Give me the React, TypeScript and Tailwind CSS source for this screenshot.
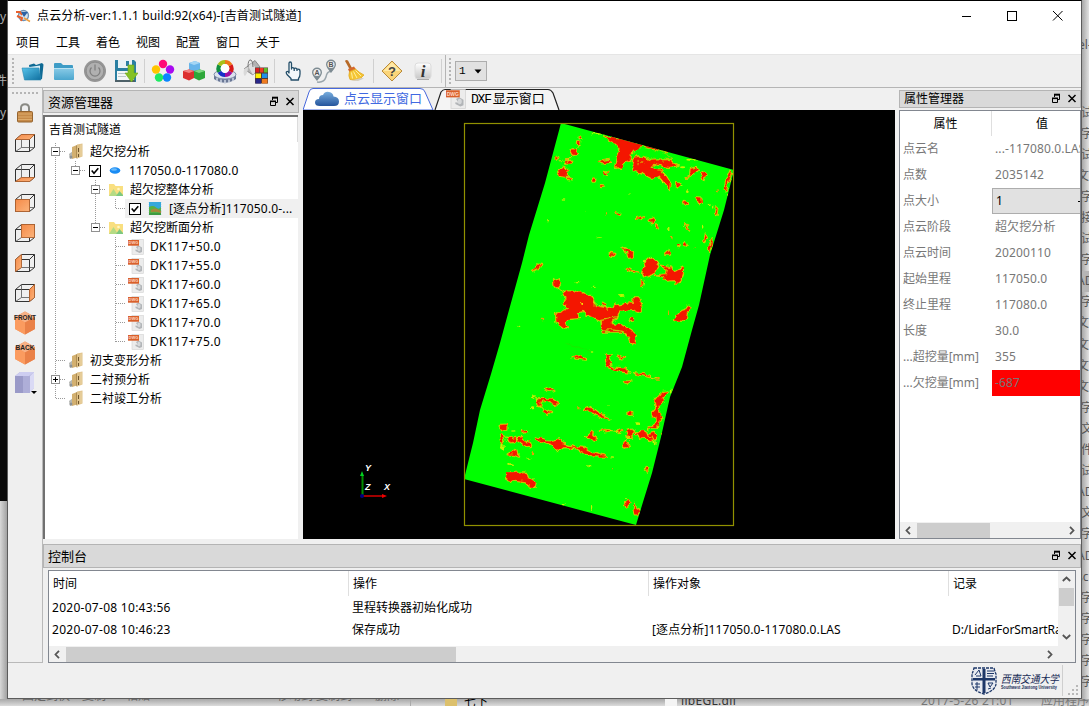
import React from "react";

const UI = "font-['Noto_Sans','Noto_Sans_CJK_SC',sans-serif]";

/* ---------- toolbar icons ---------- */

function FolderOpen() {
  return (
    <svg width="24" height="22" viewBox="0 0 24 22">
      <defs>
        <linearGradient id="fo" x1="0" y1="0" x2="1" y2="1">
          <stop offset="0" stopColor="#57c3ea" />
          <stop offset="1" stopColor="#0f6f9f" />
        </linearGradient>
      </defs>
      <path d="M8 5 L13 3.500 L15 5 L21 3 L22.500 4.500 L21 19 L10 19 Z" fill="#0f6a94" />
      <path d="M5 7.500 L19 5.500 L19 19 L7 19 Z" fill="#d9eef7" />
      <path d="M1 8 H18 L20 20 H3.500 Z" fill="url(#fo)" stroke="#2a86ae" strokeWidth=".6" />
    </svg>
  );
}
function Folder() {
  return (
    <svg width="24" height="22" viewBox="0 0 24 22">
      <defs>
        <linearGradient id="fb" x1="0" y1="0" x2="0" y2="1">
          <stop offset="0" stopColor="#8acbe7" />
          <stop offset="1" stopColor="#4ba6ce" />
        </linearGradient>
      </defs>
      <path d="M2 4 Q2 3 3 3 H9 L11 5 H20 Q21 5 21 6 V10 H2 Z" fill="#3e9cc6" />
      <rect x="2" y="8" width="20" height="12" rx="1" fill="url(#fb)" />
      <path d="M2 8.500 H22" stroke="#b9e2f2" />
    </svg>
  );
}
function Power() {
  return (
    <svg width="24" height="24" viewBox="0 0 24 24">
      <circle cx="12" cy="12" r="11" fill="#959595" />
      <circle cx="12" cy="12" r="8.800" fill="#b0b0b0" stroke="#858585" strokeWidth=".7" />
      <path d="M8.500 8.500 A5 5 0 1 0 15.500 8.500 M12 5.500 V11.500" fill="none" stroke="#7d7d7d" strokeWidth="1.200" />
    </svg>
  );
}
function Save() {
  return (
    <svg width="24" height="24" viewBox="0 0 24 24">
      <path d="M1 1 H20 L22 3 V23 H1 Z" fill="#2a7fa2" />
      <rect x="4" y="1" width="14" height="8" fill="#e8f2f6" />
      <rect x="12" y="2" width="3" height="5" fill="#2a7fa2" />
      <rect x="3" y="12" width="17" height="9" fill="#f3f7f8" />
      <path d="M4 14.500 H12 M4 17.500 H12" stroke="#bcc8cc" />
      <rect x="1" y="21" width="20" height="2" fill="#4d6068" />
      <path d="M14 6 H20 V14 H24 L17.500 23 L11 14 H14 Z" fill="#84c225" stroke="#6aa517" strokeWidth=".6" />
    </svg>
  );
}
function Dots() {
  return (
    <svg width="24" height="24" viewBox="0 0 24 24">
      <circle cx="12" cy="5" r="4.200" fill="#ff0a78" />
      <circle cx="19" cy="10.500" r="4.200" fill="#a80af0" />
      <circle cx="16" cy="18.500" r="4.200" fill="#0a86ff" />
      <circle cx="8" cy="18.500" r="4.200" fill="#1eea62" />
      <circle cx="5" cy="10.500" r="4.200" fill="#ffc400" />
    </svg>
  );
}
function Cubes() {
  return (
    <svg width="24" height="24" viewBox="0 0 24 24">
      <path d="M7 4 L13 2 L18 4 V11 L12 12.500 L7 11 Z" fill="#67b4ea" />
      <path d="M7 4 L13 2 L18 4 L12 6 Z" fill="#a5d6f5" />
      <path d="M1 12 L7 10.500 L12 12 V19 L7 21.500 L1 19 Z" fill="#dc2f2f" />
      <path d="M1 12 L7 10.500 L12 12 L7 14 Z" fill="#f28080" />
      <path d="M12 12 L18 10.500 L23 12 V19 L17 21.500 L12 19 Z" fill="#2ea73a" />
      <path d="M12 12 L18 10.500 L23 12 L17 14 Z" fill="#80d884" />
    </svg>
  );
}
function ColorRing() {
  return (
    <svg width="24" height="25" viewBox="0 0 24 25">
      <path d="M1 15 V20 Q12 27.500 23 20 V15 Z" fill="#6a7896" />
      <ellipse cx="12" cy="15.500" rx="11" ry="4.500" fill="#dde3ee" stroke="#8290ab" />
      <path d="M4 19 V22 M8 20.500 V24 M12 21 V25 M16 20.500 V24 M20 19 V22" stroke="#d2d9e6" strokeWidth="1.500" />
      <g fill="none" strokeWidth="4.200">
        <path d="M12 3 A6.500 6.500 0 0 1 17.600 6.200" stroke="#f07818" />
        <path d="M17.600 6.200 A6.500 6.500 0 0 1 17.600 12.800" stroke="#d81818" />
        <path d="M17.600 12.800 A6.500 6.500 0 0 1 12 16" stroke="#a010a0" />
        <path d="M12 16 A6.500 6.500 0 0 1 6.400 12.800" stroke="#1830c8" />
        <path d="M6.400 12.800 A6.500 6.500 0 0 1 6.400 6.200" stroke="#109040" />
        <path d="M6.400 6.200 A6.500 6.500 0 0 1 12 3" stroke="#a8c018" />
      </g>
      <circle cx="12" cy="9.500" r="4.400" fill="#fff" />
    </svg>
  );
}
function PaintGrid() {
  return (
    <svg width="25" height="25" viewBox="0 0 25 25">
      <path d="M5 7 L12 1.500 L17 8 L10 16 L1 10 Z" fill="#b3b3b3" stroke="#8a8a8a" />
      <path d="M5 7 L9 4 L14 11 L10 16 Z" fill="#dedede" />
      <path d="M1 10 Q0 16 2 17 Q5 14 5 8 Z" fill="#d9d9d9" />
      <path d="M5 8 Q5 0 8 1 Q10 2 10 8" fill="none" stroke="#777" />
      <rect x="12" y="8.500" width="13" height="16" fill="#553b32" />
      <rect x="12.500" y="9" width="3.600" height="4.500" fill="#d82020" />
      <rect x="16.800" y="9" width="3.600" height="4.500" fill="#f03a24" />
      <rect x="21" y="9" width="3.600" height="4.500" fill="#5ebd2b" />
      <rect x="12.500" y="14.500" width="5.500" height="4.500" fill="#fff000" />
      <rect x="19" y="14.500" width="5.500" height="4.500" fill="#2090e8" />
      <rect x="12.500" y="20" width="5.500" height="4.500" fill="#29288a" />
      <rect x="19" y="20" width="5.500" height="4.500" fill="#ee7b20" />
    </svg>
  );
}
function Hand() {
  return (
    <svg width="20" height="24" viewBox="0 0 20 24" fill="#f4f8fa" stroke="#244e69" strokeWidth="1.300" strokeLinejoin="round">
      <path d="M6 14 V4.500 Q6 3 7.200 3 T8.500 4.500 V10 V9 Q9.800 8 11.200 9.500 Q12.800 8.300 14 10.200 Q16.800 9.700 17 12 V15 Q17 18 15.500 19.500 V21 H8 V19.500 L4 15.500 Q2.500 13 4 12.500 Q5 12.200 6 14 Z" />
      <path d="M11.200 9.500 V12 M14 10.200 V12" fill="none" />
    </svg>
  );
}
function PinAB() {
  return (
    <svg width="26" height="25" viewBox="0 0 26 25">
      <path d="M6 23 Q13 24 15 18 Q16 12 20 12.500" fill="none" stroke="#9aa5ab" strokeWidth="1.500" />
      <path d="M6 22 Q1 16 1 13.500 A5 5 0 0 1 11 13.500 Q11 16 6 22 Z M20 14 Q15 8 15 5.500 A5 5 0 0 1 25 5.500 Q25 8 20 14 Z" fill="#7d8b92" />
      <circle cx="6" cy="13.500" r="3.600" fill="#eee" />
      <circle cx="20" cy="5.500" r="3.600" fill="#eee" />
      <text x="6" y="16" textAnchor="middle" className="font-['Liberation_Sans',sans-serif] text-[7px] font-bold" fill="#555">A</text>
      <text x="20" y="8" textAnchor="middle" className="font-['Liberation_Sans',sans-serif] text-[7px] font-bold" fill="#555">B</text>
    </svg>
  );
}
function Broom() {
  return (
    <svg width="24" height="24" viewBox="0 0 24 24">
      <path d="M2 2 Q3 .5 5 1.500 L9 9 L6.500 10 Z" fill="#b76a28" />
      <path d="M5 10 L11 7.500 L13 10.500 L6.500 13.500 Z" fill="#d6682c" />
      <path d="M6.500 12.500 L12.500 10 Q16 13.500 21 16 L18 19 L12 21 L7 20.500 Q5 17 6.500 12.500 Z" fill="#f4c534" stroke="#dfa51c" strokeWidth=".7" />
      <path d="M8.500 13.500 L9.500 19.500 M10.500 12.500 L14 19 M12.500 11.500 L18 17" stroke="#fff0a2" />
      <path d="M8 21.500 L18 19 L21 19.500 L15 22 Z" fill="#d3cdbc" />
    </svg>
  );
}
function Question() {
  return (
    <svg width="24" height="24" viewBox="0 0 24 24">
      <path d="M12 2 L22 12 L12 22 L2 12 Z" fill="#fbd579" stroke="#b88a3c" strokeLinejoin="round" />
      <path d="M12 3.200 L20.500 12 H3.500 Z" fill="#ffe9a5" />
      <text x="12" y="16.500" textAnchor="middle" className="font-['Liberation_Sans',sans-serif] text-[13px] font-bold" fill="#444">?</text>
    </svg>
  );
}
function Info() {
  return (
    <svg width="18" height="20" viewBox="0 0 18 20">
      <defs>
        <linearGradient id="inf" x1="0" y1="0" x2="0" y2="1">
          <stop offset="0" stopColor="#fff" />
          <stop offset="1" stopColor="#c7c7c7" />
        </linearGradient>
      </defs>
      <rect x="1" y="2" width="16" height="16" rx="3" fill="url(#inf)" stroke="#dcdcdc" />
      <path d="M3 18.500 H15" stroke="#aaa" />
      <text x="9" y="16" textAnchor="middle" className="font-['Liberation_Serif',serif] text-[17px] font-bold italic" fill="#333">i</text>
    </svg>
  );
}

/* ---------- side icons ---------- */

function Lock() {
  return (
    <svg width="16" height="20" viewBox="0 0 16 20">
      <path d="M4 10 V5 Q4 1.200 8 1.200 T12 5 V10" fill="none" stroke="#8a8a84" strokeWidth="2" />
      <rect x=".5" y="8.500" width="15" height="10.500" rx="1" fill="#c58a49" stroke="#95642f" />
      <path d="M1 11 H15 M1 14 H15 M1 16.500 H15" stroke="#deac6c" />
    </svg>
  );
}
const CUBE_FACES: Record<string, string> = {
  top: "M1 6 L7 1 H20 L15 6 Z",
  bottom: "M1 18 L7 14 H20 L15 18 Z",
  front: "M1 6 H15 V18 H1 Z",
  back: "M7 1 H20 V14 H7 Z",
  left: "M1 6 L7 1 V14 L1 18 Z",
  right: "M15 6 L20 1 V14 L15 18 Z",
};
function WireCube({ face }: { face: string }) {
  return (
    <svg width="22" height="20" viewBox="-.5 -.5 22 20">
      <defs>
        <linearGradient id="orf" x1="0" y1="0" x2="1" y2="1">
          <stop offset="0" stopColor="#f58a48" />
          <stop offset="1" stopColor="#fbb47c" />
        </linearGradient>
      </defs>
      <path d="M1 6 H15 V18 H1 Z M1 6 L7 1 H20 L15 6 M20 1 V14 L15 18" fill="none" stroke="#333" />
      <path d="M7 1 V14 H20 M7 14 L1 18" fill="none" stroke="#555" strokeWidth=".8" />
      <path d={CUBE_FACES[face]} fill="url(#orf)" stroke="#b5622c" strokeWidth=".8" />
    </svg>
  );
}
function SolidCube({ label }: { label: string }) {
  return (
    <svg width="26" height="26" viewBox="0 0 26 26" className="overflow-visible">
      <path d="M13 1.500 L23 7 V19 L13 24.500 L3 19 V7 Z" fill="#f1915a" />
      <path d="M13 1.500 L23 7 L13 12.500 L3 7 Z" fill="#f7b186" />
      <path d="M13 12.500 L23 7 V19 L13 24.500 Z" fill="#ea8148" />
      <path d="M13 12.500 L3 7 V19 L13 24.500 Z" fill="#fb9b5f" />
      <text x="13" y="9.500" textAnchor="middle" textLength={label === "FRONT" ? 22 : 19} lengthAdjust="spacingAndGlyphs" className="font-['Liberation_Sans',sans-serif] text-[7.500px] font-bold" fill="#222">{label}</text>
    </svg>
  );
}
function LilacCube() {
  return (
    <svg width="24" height="24" viewBox="0 0 24 24">
      <path d="M2 5 L7 1 H21 V17 L16 22 H2 Z" fill="#b4b4da" />
      <path d="M2 5 L7 1 H21 L16 5 Z" fill="#cdcdf0" />
      <rect x="2" y="5" width="8" height="17" fill="#9a9ac8" />
      <rect x="10" y="5" width="7" height="17" fill="#aeaed8" />
      <path d="M17 5 L21 1 V17 L17 22 Z" fill="#dadaf5" />
      <path d="M18 20 H24 L21 23 Z" fill="#000" />
    </svg>
  );
}

/* ---------- tree icons ---------- */

function Books() {
  return (
    <svg width="15" height="17" viewBox="0 0 15 17">
      <path d="M0 11 L4 8 V15 L1 16 Z" fill="#b4b6b2" />
      <path d="M3 4 L8 2 V14.500 L3 16 Z" fill="#d3b070" />
      <path d="M7.500 2.500 L9 2 V15 L7.500 15.500 Z" fill="#8a6a35" />
      <path d="M8 1.500 L13.500 .5 V13.500 L8 15.500 Z" fill="#dfc188" />
      <path d="M9.500 5 V9 M9.500 11 V14" stroke="#70552b" />
      <path d="M12 1.500 V13.500" stroke="#ecd7a8" />
      <circle cx="2" cy="14" r="1.500" fill="#8d9296" />
    </svg>
  );
}
function Ellipse() {
  return (
    <svg width="14" height="14" viewBox="0 0 14 14">
      <ellipse cx="7" cy="6.500" rx="5.300" ry="3.300" fill="#1a8cf4" />
      <ellipse cx="6" cy="5.500" rx="3" ry="1.300" fill="#67b9fb" />
    </svg>
  );
}
function PicFolder() {
  return (
    <svg width="14" height="13" viewBox="0 0 14 13">
      <path d="M0 1 H5 L6.500 3 H14 V13 H0 Z" fill="#f9df80" />
      <circle cx="9.500" cy="6" r="1.300" fill="#fff7c6" />
      <path d="M0 13 L4.500 6 L9 13 Z" fill="#b5db84" />
      <path d="M7 13 L10.500 8 L14 12 V13 Z" fill="#7cc880" />
    </svg>
  );
}
function Landscape() {
  return (
    <svg width="14" height="14" viewBox="0 0 14 14">
      <rect x="1" width="12" height="13" fill="#35a8dc" />
      <path d="M1 5 Q5 3 8 5.500 T13 5 V13 H1 Z" fill="#56b045" />
      <path d="M3 8 Q7 5 11 8 T13 9 V11 Q8 9 3 10 Z" fill="#a8873c" />
      <path d="M1 11 H13 V13 H1 Z" fill="#3e9b42" />
      <path d="M.5 0 V14 M13.500 0 V14" stroke="#d9e7ef" strokeDasharray="1 1" />
    </svg>
  );
}
function Dwg({ big }: { big?: boolean }) {
  return (
    <svg width={big ? 20 : 16} height={big ? 20 : 16} viewBox="0 0 16 16">
      <rect x="4" y=".5" width="11.500" height="15" fill="#ececec" stroke="#d2d2d2" strokeWidth=".6" />
      <path d="M8 8 L10.500 6.500 L14 8.500 V13 L11.500 14 L7.500 12 V10.500 L10 11 Z" fill="#b2b5b8" />
      <ellipse cx="11" cy="10" rx="1.600" ry="2.200" fill="#d6d8da" />
      <rect x="0" y="1" width="11" height="5.700" fill="#d9602b" />
      <text x="5.500" y="5.400" textAnchor="middle" className="font-['Liberation_Sans',sans-serif] text-[4px] font-bold" fill="#ffd8c4">DWG</text>
    </svg>
  );
}

function CheckBox() {
  return (
    <svg width="12" height="12" viewBox="0 0 12 12" className="shrink-0">
      <rect x=".5" y=".5" width="11" height="11" fill="#fff" stroke="#000" />
      <path d="M2.700 5.500 L5 8.200 L9.300 3.200" fill="none" stroke="#000" strokeWidth="1.600" />
    </svg>
  );
}

function Expander({ state }: { state?: "open" | "closed" }) {
  if (!state) return <span className="w-[9px] shrink-0" />;
  return (
    <svg width="9" height="9" viewBox="0 0 9 9" className="relative shrink-0">
      <rect x=".5" y=".5" width="8" height="8" fill="#fff" stroke="#919191" />
      <path d={state === "open" ? "M2 4.500 H7" : "M2 4.500 H7 M4.500 2 V7"} stroke="#000" />
    </svg>
  );
}

type Node = { level: number; text: string; icon: React.ReactNode; state?: "open" | "closed"; check?: boolean; sel?: boolean };
const NODES: Node[] = [
  { level: 0, text: "超欠挖分析", icon: <Books />, state: "open" },
  { level: 1, text: "117050.0-117080.0", icon: <Ellipse />, state: "open", check: true },
  { level: 2, text: "超欠挖整体分析", icon: <PicFolder />, state: "open" },
  { level: 3, text: "[逐点分析]117050.0-...", icon: <Landscape />, check: true, sel: true },
  { level: 2, text: "超欠挖断面分析", icon: <PicFolder />, state: "open" },
  ...["50", "55", "60", "65", "70", "75"].map((n) => ({ level: 3, text: `DK117+${n}.0`, icon: <Dwg /> })),
  { level: 0, text: "初支变形分析", icon: <Books /> },
  { level: 0, text: "二衬预分析", icon: <Books />, state: "closed" },
  { level: 0, text: "二衬竣工分析", icon: <Books /> },
];
const INDENT = ["pl-[6px]", "pl-[26px]", "pl-[46px]", "pl-[66px]"];

function Tree() {
  return (
    <div className="relative mr-px mt-[2px] min-h-0 flex-1 border-l-2 border-t-2 border-[#707070] bg-white">
      <div className="flex h-[25px] items-center border-r border-[#dcdcdc] pl-1 text-[12px]">吉首测试隧道</div>
      <div className="relative">
        <svg width="100" height="270" className="absolute left-0 top-0" fill="none" stroke="#999" strokeDasharray="1 1">
          <path d="M10.500 1 V257 M11 9.500 H21 M11 218.500 H21 M11 237.500 H21 M11 256.500 H21" />
          <path d="M30.500 19 V29 M31 28.500 H41" />
          <path d="M50.500 38 V86 M51 47.500 H61 M51 85.500 H61" />
          <path d="M70.500 57 V67 M71 66.500 H80" />
          <path d="M70.500 95 V200 M71 104.500 H80 M71 123.500 H80 M71 142.500 H80 M71 161.500 H80 M71 180.500 H80 M71 199.500 H80" />
        </svg>
        {NODES.map((n, i) => (
          <div key={i} className={`relative flex h-[19px] items-center ${INDENT[n.level]}`}>
            <Expander state={n.state} />
            <div className={`flex h-full items-center ${n.sel ? "ml-[5px] flex-1 bg-[#f0f0f0] pl-[4px]" : "ml-[8px]"} ${n.level === 1 ? "pl-[1px]" : ""}`}>
              {n.check && <span className="mr-[6px] flex">{<CheckBox />}</span>}
              <span className="flex w-[16px] shrink-0 justify-center">{n.icon}</span>
              <span className={`ml-[6px] whitespace-nowrap text-[12px] ${n.text.startsWith("DK") ? "tracking-[.35px]" : ""} ${n.sel ? "tracking-[.15px]" : ""} ${n.level === 1 ? "tracking-[.18px]" : ""}`}>{n.text}</span>
            </div>
          </div>
        ))}
      </div>
    </div>
  );
}

function DockButtons() {
  return (
    <svg width="28" height="12" viewBox="0 0 28 12" fill="none" stroke="#000">
      <path d="M4.500 4 V2 H9.500 V6.500 H8" />
      <path d="M4 1.500 H10" strokeWidth="1.600" />
      <path d="M2.500 5.500 H7.500 V9.500 H2.500 Z" />
      <path d="M2 5.300 H8" strokeWidth="1.600" />
      <path d="M18.500 2 L25.500 9 M25.500 2 L18.500 9" strokeWidth="1.500" />
    </svg>
  );
}
function DockTitle({ title, className }: { title: string; className: string }) {
  return (
    <div className={`flex shrink-0 items-center justify-between border border-[#b4b4b4] bg-[#d9d9d9] pl-1 pr-[2px] ${className}`}>
      <span>{title}</span>
      <DockButtons />
    </div>
  );
}

/* ---------- point cloud ---------- */

const UPPER = [
  "M490 76 L540 86 L600 97 L680 123 L650 119 L610 110 L585 118 L568 134 L573 148 L560 152 L548 163 L541 177 L527 163 L531 140 L539 118 L529 99 Z",
  "M582 143 L605 140 L633 152 L690 151 L706 167 L690 171 L640 161 L633 173 L663 181 L680 202 L692 222 L690 237 L682 225 L661 199 L633 203 L608 190 L582 181 L577 162 Z",
  "M391 121 L404 117 L414 129 L405 137 L396 131 Z M371 151 L391 150 L397 156 L381 158 Z M371 169 L382 181 L380 200 L362 198 L355 188 Z",
  "M480 155 L506 150 L508 156 L490 160 Z M384 204 L396 208 L390 211 Z M411 97 L418 96 L417 104 L411 103 Z M419 80 L424 80 L423 88 L419 87 Z M349 141 L358 145 L356 149 L351 149 Z",
  "M492 186 L503 188 L501 192 L494 192 Z M456 209 L466 210 L464 215 L458 215 Z M480 228 L492 230 L483 231 Z",
  "M752 178 L765 174 L773 181 L762 190 L740 203 L751 194 Z M787 188 L796 193 L791 210 L786 199 Z M706 216 L719 223 L715 229 L706 226 Z",
  "M731 273 L745 277 L735 284 Z M770 265 L784 266 L785 278 L777 279 Z M828 292 L832 297 L830 315 L825 309 Z M872 181 L876 185 L864 217 L857 244 L854 240 L859 211 Z",
  "M629 326 L640 323 L642 332 L633 340 Z M647 346 L653 350 L650 351 Z M591 324 L608 319 L598 328 Z M529 308 L538 309 L535 313 Z",
  "M512 429 L526 432 L521 438 L514 436 Z M544 413 L579 426 L578 439 L565 440 L562 425 Z M556 476 L591 487 L575 485 Z",
  "M614 458 L631 443 L655 462 L640 492 L620 499 L606 491 L610 478 L617 473 Z M664 467 L697 473 L702 488 L728 473 L729 492 L722 512 L711 521 L701 510 L679 512 L674 500 L648 496 L680 493 L684 481 Z",
  "M342 510 L353 505 L360 524 L353 534 L344 526 Z M280 481 L304 461 L299 472 Z M817 385 L818 401 L810 420 L807 417 Z M734 340 L747 362 L740 355 Z M797 371 L801 383 L793 393 Z",
  "M372 546 L382 544 L399 546 L412 542 L452 560 L463 576 L464 591 L503 599 L529 587 L563 581 L580 582 L581 565 L598 565 L604 585 L602 605 L584 599 L557 602 L538 601 L531 622 L522 628 L512 639 L552 665 L487 665 L484 630 L440 613 L428 599 L412 605 L414 624 L381 627 L377 638 L382 651 L374 656 L350 640 L348 612 L378 601 L389 594 L369 580 L377 568 Z",
  "M747 587 L752 595 L741 604 L738 624 L718 635 L699 629 L720 605 L739 599 Z M568 627 L579 623 L579 632 L570 633 Z",
  "M728 404 L735 397 L740 408 Z M711 405 L719 405 L715 411 Z M677 431 L686 423 L690 431 Z M488 578 L496 583 L492 587 Z M605 507 L610 511 L605 528 Z",
];
const LOWER = [
  "M398 141 L420 139 L438 149 L411 146 Z M501 133 L515 135 L503 142 L509 154 L510 168 L526 173 L563 177 L562 187 L541 184 L518 176 L497 169 L501 158 L496 137 Z M532 137 L555 143 L548 145 Z",
  "M487 58 L486 30 L531 22 L520 26 L511 40 L540 43 L575 67 L588 73 L582 103 L575 98 L568 78 L549 62 L515 58 Z",
  "M583 190 L616 193 L630 201 L610 196 Z M552 215 L571 214 L562 219 Z M315 237 L326 233 L337 240 L329 243 Z M294 268 L334 266 L359 284 L340 281 L322 272 L302 275 L300 289 L295 279 Z M308 305 L323 300 L333 306 L325 312 Z",
  "M432 301 L453 291 L475 308 L508 326 L483 319 L459 309 Z M562 309 L577 306 L577 314 L568 315 Z M672 246 L683 244 L679 254 L670 259 L665 275 L655 288 L659 318 L669 325 L659 329 L657 343 L641 356 L627 356 L644 345 L651 335 L650 323 L638 318 L637 308 L650 291 L647 269 L657 256 Z",
  "M288 382 L317 391 L340 393 L358 388 L371 404 L400 411 L430 414 L460 427 L500 440 L450 438 L409 414 L371 411 L354 423 L337 403 L310 394 L288 390 Z",
  "M438 379 L455 369 L468 383 L464 389 L447 384 Z M482 359 L512 361 L496 364 Z M534 360 L542 364 L537 369 Z M560 361 L574 356 L584 369 L573 380 L563 381 Z M592 368 L610 363 L625 373 L642 369 L648 386 L630 393 L620 383 L602 385 L591 376 Z M544 405 L562 396 L567 410 L551 412 Z",
  "M179 348 L199 347 L199 359 L186 358 Z M181 381 L188 373 L193 389 L187 405 Z M205 387 L223 381 L225 390 L216 397 L205 393 Z M246 363 L261 367 L256 371 Z M237 382 L246 378 L241 389 L271 400 L269 408 L252 405 L229 389 Z M203 433 L226 420 L228 431 L237 440 L222 434 Z",
  "M198 490 L217 490 L236 488 L254 487 L264 503 L287 516 L284 531 L264 528 L258 517 L219 511 L199 507 Z",
  "M622 470 L627 477 L621 485 L618 477 Z M556 572 L565 571 L568 580 L562 590 L555 585 Z M583 582 L588 593 L598 600 L592 613 L584 613 L581 600 Z",
];
const UPPER_SPOTS = [[369, 270, 4, 2], [498, 310, 3, 4], [439, 307, 2, 2], [325, 332, 4, 2], [478, 384, 9, 2], [694, 386, 4, 7], [412, 515, 9, 2], [461, 532, 7, 2], [545, 555, 9, 3], [309, 627, 7, 4], [235, 649, 3, 2], [790, 350, 3, 9], [818, 290, 2, 6], [830, 244, 3, 5], [688, 357, 4, 3], [728, 172, 8, 3], [570, 252, 2, 2], [687, 608, 3, 8], [668, 215, 3, 8], [613, 451, 8, 2], [742, 242, 4, 4], [741, 349, 4, 8], [754, 149, 15, 3], [474, 71, 19, 3], [806, 285, 3, 3], [764, 412, 3, 2], [863, 255, 2, 7], [726, 231, 5, 3], [554, 421, 7, 3]];
const LOWER_SPOTS = [[453, 123, 4, 2], [655, 206, 8, 3], [281, 259, 8, 3], [278, 295, 9, 3], [301, 284, 3, 8], [415, 296, 4, 2], [507, 288, 2, 2], [595, 341, 9, 4], [186, 412, 5, 10], [279, 428, 4, 5], [264, 447, 5, 2], [213, 464, 9, 4], [450, 467, 6, 2], [518, 475, 4, 3], [371, 583, 5, 4], [455, 592, 2, 5], [695, 243, 3, 8], [662, 370, 2, 6], [647, 397, 3, 6], [518, 441, 4, 2], [220, 363, 7, 2], [597, 604, 3, 10], [555, 562, 3, 2], [630, 386, 6, 5], [573, 367, 10, 4], [546, 360, 4, 4]];

function Patches({ d, spots }: { d: string[]; spots: number[][] }) {
  return (
    <>
      {spots.map(([x, y, rx, ry], i) => (
        <ellipse key={i} cx={x} cy={y} rx={rx} ry={ry} fill={i % 4 === 1 ? "#e8a000" : "#c4f400"} />
      ))}
      <path d={d.join(" ")} fill="#f31505" stroke="#a8e800" strokeWidth="7" strokeLinejoin="round" />
      <path d={d.join(" ")} fill="#f31505" stroke="#f0c000" strokeWidth="4" strokeLinejoin="round" />
      <path d={d.join(" ")} fill="#f41405" stroke="#d43a00" strokeWidth="1" strokeLinejoin="round" />
    </>
  );
}

const BODY = "M258 13 L431 60 L421 100 L407 145 L396 195 L389 220 L379 257 L367 287 L358 327 L349 363 L340 392 L333 415 L161 369 L170 333 L177 300 L188 264 L197 233 L206 200 L219 153 L226 125 L242 73 Z";

function Viewport() {
  return (
    <div className="h-[429px] w-[592px] bg-black">
      <svg width="592" height="429" viewBox="0 0 592 429">
        <defs>
          <clipPath id="body"><path d={BODY} /></clipPath>
          <filter id="rough" filterUnits="userSpaceOnUse" x="0" y="-50" width="950" height="800">
            <feTurbulence type="fractalNoise" baseFrequency="0.06" numOctaves="2" seed="4" />
            <feDisplacementMap in="SourceGraphic" scale="18" xChannelSelector="R" yChannelSelector="G" />
          </filter>
        </defs>
        <path d={BODY} fill="#00ff00" />
        <g clipPath="url(#body)">
          <g transform="translate(137 0) scale(.33333)" filter="url(#rough)">
            <Patches d={UPPER} spots={UPPER_SPOTS} />
            <path d="M583 122 Q598 112 610 112 L655 123 L676 132 L698 144 L690 148 L630 144 L603 137 L587 136 Z" fill="#00ff00" stroke="#d9c800" strokeWidth="2" />
            <path d="M592 154 h5 M602 154 h5 M592 161 h5 M602 161 h5" stroke="#e09000" strokeWidth="3" />
            <path d="M397 137 L385 150 L372 169 M417 104 L408 117 M355 148 L366 160 M652 203 Q668 205 672 215 M708 165 L720 168 M734 345 L740 350 M353 534 L374 546 M655 462 L665 467 M460 575 L480 590 L503 592" fill="none" stroke="#e6d800" strokeWidth="2.500" />
            <ellipse cx="427" cy="577" rx="4" ry="5" fill="#f5e600" />
            <ellipse cx="509" cy="625" rx="3" ry="3" fill="#f5d600" />
          </g>
          <g transform="translate(137 200) scale(.33333)" filter="url(#rough)">
            <Patches d={LOWER} spots={LOWER_SPOTS} />
            <path d="M375 100 Q405 108 450 124" stroke="#27e000" strokeWidth="2" fill="none" />
            <path d="M193 375 L205 387 M225 385 L238 380 M300 289 L310 300 M275 259 L294 268 M563 184 L583 190 M630 201 L650 206 M512 361 L534 365 M584 369 L592 370 M567 381 L562 396 M625 356 L630 375 L640 395" fill="none" stroke="#e6d800" strokeWidth="3" />
          </g>
        </g>
        <rect x="161.500" y="13.500" width="269" height="402" fill="none" stroke="#919100" strokeWidth="1.200" />
        <path d="M59.500 386 V365" stroke="#008c00" strokeWidth="2" />
        <path d="M59 361 L57 366 H61 Z" fill="#00d020" />
        <path d="M60 386 H79" stroke="#a00000" strokeWidth="2" />
        <path d="M84 386 L79 384 V388 Z" fill="#f00000" />
        <circle cx="59" cy="386" r="2" fill="#000080" />
        <g fill="#fff" className="font-['Liberation_Sans',sans-serif] text-[9px] font-bold italic">
          <text x="62" y="361">Y</text>
          <text x="62" y="380">Z</text>
          <text x="81" y="380">X</text>
        </g>
      </svg>
    </div>
  );
}

function Tabs() {
  return (
    <div className="relative flex h-[22px] w-[592px] font-['Liberation_Mono','Noto_Sans_CJK_SC',monospace] text-[13px]">
      <svg width="262" height="22" className="absolute left-0 top-0">
        <path d="M0 22 L6 4 Q7 .5 10 .5 H117 Q121 .5 122 4 L130 22 Z" fill="#fff" stroke="#4768dc" />
        <path d="M132 22 L138 4 Q140 1.500 142 1.500 H245 Q248 1.500 250 5 L256 22" fill="#f4f4f4" stroke="#222" strokeWidth="1.200" />
      </svg>
      <div className="relative flex w-[131px] items-center pl-[11px] pt-px text-[#4169e1]">
        <svg width="26" height="17" viewBox="0 0 26 17">
          <defs>
            <linearGradient id="cl" x1="0" y1="0" x2="0" y2="1">
              <stop offset="0" stopColor="#78aede" />
              <stop offset="1" stopColor="#24549c" />
            </linearGradient>
          </defs>
          <path d="M6 15 Q1 15 1 11.500 T5 8 Q5 4 9 4 Q11 0 15 1 Q19 1.500 19.500 5.500 Q25 6 25 10.500 T20 15 Z" fill="url(#cl)" />
        </svg>
        <span className="ml-[4px] whitespace-nowrap pt-px">点云显示窗口</span>
      </div>
      <div className="relative flex items-center pl-[12px] text-black">
        <Dwg big />
        <span className="ml-[5px] flex items-center whitespace-nowrap pt-[2px]"><span className="tracking-[-1.200px]">DXF</span><span className="ml-[2px]">显示窗口</span></span>
      </div>
    </div>
  );
}

/* ---------- property dock ---------- */

const PROPS: [string, string][] = [
  ["点云名", "...-117080.0.LAS"],
  ["点数", "2035142"],
  ["点大小", "1"],
  ["点云阶段", "超欠挖分析"],
  ["点云时间", "20200110"],
  ["起始里程", "117050.0"],
  ["终止里程", "117080.0"],
  ["长度", "30.0"],
  ["...超挖量[mm]", "355"],
  ["...欠挖量[mm]", "-687"],
];

function Chevron({ d }: { d: string }) {
  return (
    <svg width="9" height="9" viewBox="0 0 9 9" className="shrink-0" fill="none" stroke="#555" strokeWidth="1.800">
      <path d={d} />
    </svg>
  );
}
const LEFT = "M6 .8 L2.500 4.500 L6 8.200";
const RIGHT = "M3 .8 L6.500 4.500 L3 8.200";
const UP = "M.8 6 L4.500 2.500 L8.200 6";
const DOWN = "M.8 3 L4.500 6.500 L8.200 3";

function Properties() {
  return (
    <div className="flex w-[182px] flex-col pt-[2px]">
      <DockTitle title="属性管理器" className="h-[18px] text-[12px]" />
      <div className="mt-[2px] flex min-h-0 flex-1 flex-col overflow-hidden border border-[#828790] bg-white text-[12px]">
        <div className="flex h-[25px] shrink-0 items-center">
          <span className="flex h-full w-[92px] shrink-0 items-center justify-center border-r border-[#dfdfdf]">属性</span>
          <span className="w-[100px] shrink-0 text-center">值</span>
        </div>
        {PROPS.map(([k, v]) => (
          <div key={k} className="flex h-[26px] shrink-0 items-center text-[#777]">
            <span className="w-[92px] shrink-0 whitespace-nowrap pl-[3px]">{k}</span>
            {k === "点大小" ? (
              <span className="flex h-full w-[90px] shrink-0 items-center justify-between border border-[#adadad] bg-[#e1e1e1] pl-[3px] text-black">{v}<span className="mr-px h-px w-[2px] bg-black" /></span>
            ) : (
              <span className={`flex h-full w-[90px] shrink-0 items-center whitespace-nowrap pl-[3px] tracking-[.12px] ${v === "-687" ? "bg-[#ff0000]" : ""}`}>{v}</span>
            )}
          </div>
        ))}
        <div className="mt-auto flex h-[16px] shrink-0 items-center bg-[#f0f0f0]">
          <span className="flex w-[17px] justify-center"><Chevron d={LEFT} /></span>
          <span className="h-[15px] w-[73px] bg-[#cdcdcd]" />
          <span className="ml-auto mr-[4px]"><Chevron d={RIGHT} /></span>
        </div>
      </div>
    </div>
  );
}

/* ---------- console ---------- */

const LOG = [
  ["2020-07-08 10:43:56", "里程转换器初始化成功", "", ""],
  ["2020-07-08 10:46:23", "保存成功", "[逐点分析]117050.0-117080.0.LAS", "D:/LidarForSmartRail"],
];
const LOG_TRACK = ["tracking-[.28px]", "", "tracking-[.1px]", "tracking-[-.1px]"];

function Console() {
  return (
    <div className="mt-[5px] flex h-[119px] flex-col">
      <DockTitle title="控制台" className="h-[24px] text-[13px]" />
      <div className="ml-[5px] mr-[5px] mt-[2px] flex h-[93px] flex-col border border-[#828790] bg-white text-[12px]">
        <div className="flex h-[75px]">
          <div className="min-w-0 flex-1 overflow-hidden">
            <div className="flex h-[26px] items-center pb-px">
              {["时间", "操作", "操作对象"].map((h) => (
                <span key={h} className="flex h-full w-[300px] shrink-0 items-center border-r border-[#dfdfdf] pl-1">{h}</span>
              ))}
              <span className="pl-1">记录</span>
            </div>
            {LOG.map((r, i) => (
              <div key={i} className="flex h-[22px] items-center">
                {r.map((c, j) => (
                  <span key={j} className={`w-[300px] shrink-0 whitespace-nowrap pl-[3px] ${LOG_TRACK[j]}`}>{c}</span>
                ))}
              </div>
            ))}
          </div>
          <div className="flex w-[17px] flex-col items-center bg-[#f0f0f0] pr-[1px]">
            <span className="flex h-[17px] items-center"><Chevron d={UP} /></span>
            <span className="h-[18px] w-[15px] bg-[#cdcdcd]" />
            <span className="mt-auto flex h-[19px] items-center"><Chevron d={DOWN} /></span>
          </div>
        </div>
        <div className="flex h-[16px] items-center bg-[#f0f0f0]">
          <span className="flex w-[17px] justify-center"><Chevron d={LEFT} /></span>
          <span className="h-[15px] w-[390px] bg-[#cdcdcd]" />
          <span className="ml-auto mr-[21px]"><Chevron d={RIGHT} /></span>
        </div>
      </div>
    </div>
  );
}

function StatusBar() {
  return (
    <div className="flex h-[35px] items-center justify-end">
      <svg width="26" height="28" viewBox="0 0 26 28">
        <path d="M3 1 H23 Q24 5 25 7 V17 Q24 24 13 27 Q2 24 1 17 V7 Q2 5 3 1 Z" fill="#e8ebf1" stroke="#1d3768" strokeWidth="1.300" strokeDasharray="3 1" />
        <path d="M11.500 2 V11 H2 V13.500 H11.500 V26 H14.500 V13.500 H24 V11 H14.500 V2 Z" fill="#1d3768" />
        <path d="M4 8 L8 3 L10 9 M5 9 H10 M16 4 H23 M16 6.500 H23 M16 9 H22 M4 17 H9 M4 20 H9 M6 15 V23 M17 16 H22 L19 20 Z M17 22 L20 21" fill="none" stroke="#1d3768" strokeWidth="1" />
      </svg>
      <svg width="60" height="24" viewBox="0 0 60 24" className="ml-[3px] mr-[2px]" fill="#172b55">
        <text x="1" y="14" textLength="58" lengthAdjust="spacingAndGlyphs" className="font-['Noto_Sans_CJK_SC',sans-serif] text-[11px] italic">西南交通大学</text>
        <text x="1" y="20" textLength="56" lengthAdjust="spacingAndGlyphs" className="font-['Liberation_Sans',sans-serif] text-[4.500px] font-bold">Southwest Jiaotong University</text>
      </svg>
      <span className="h-[31px] w-px bg-[#cfcfcf]" />
      <svg width="12" height="12" viewBox="0 0 12 12" className="mb-[2px] ml-[5px] mr-[1px] self-end" fill="#b8b8b8">
        <path d="M8 1h2v2h-2z M8 5h2v2h-2z M8 9h2v2h-2z M4 5h2v2h-2z M4 9h2v2h-2z M0 9h2v2h-2z" />
      </svg>
    </div>
  );
}

/* ---------- chrome ---------- */

function Cell({ children }: { children: React.ReactNode }) {
  return <span className="flex h-[31px] w-[31px] shrink-0 items-center justify-center">{children}</span>;
}
function Sep() {
  return <span className="ml-[3px] mr-[2px] h-[24px] w-px shrink-0 bg-[#d0d0d0]" />;
}
function Grip({ vertical }: { vertical?: boolean }) {
  return vertical ? (
    <span className="h-[26px] w-[2px] shrink-0 bg-[repeating-linear-gradient(to_bottom,#b5b5b5_0_2px,transparent_2px_4px)]" />
  ) : (
    <span className="h-[2px] w-[26px] shrink-0 bg-[repeating-linear-gradient(to_right,#b5b5b5_0_2px,transparent_2px_4px)]" />
  );
}

function TitleBar() {
  return (
    <div className="flex h-[30px] items-center justify-between bg-white pl-[8px] pr-[17px]">
      <div className="flex items-center">
        <svg width="16" height="14" viewBox="0 0 16 14">
          <circle cx="7.500" cy="6.500" r="5" fill="#d5e5f2" stroke="#6f92b5" strokeWidth="1.300" />
          <path d="M0 3 H4 L6 6 M1 7 L6 9 L5 12" fill="none" stroke="#e8602c" strokeWidth="2" />
          <path d="M5 3 H12 L8 8 Z" fill="#2c62a4" />
          <path d="M8 9 L14 12.500" stroke="#f0a040" strokeWidth="1.500" />
        </svg>
        <span className="ml-[5px] whitespace-nowrap text-[12px] tracking-[.14px]">点云分析-ver:1.1.1 build:92(x64)-[吉首测试隧道]</span>
      </div>
      <svg width="104" height="12" viewBox="0 0 104 12" fill="none" stroke="#000">
        <path d="M2 6.500 H11" />
        <rect x="47.500" y="1.500" width="9" height="9" />
        <path d="M93 1 L102.500 10.500 M102.500 1 L93 10.500" />
      </svg>
    </div>
  );
}

function ToolBar() {
  return (
    <div className="flex h-[34px] shrink-0 items-center border-b border-t border-b-[#b5b5b5] border-t-[#e5e5e5] bg-[#efefef] pl-[4px] text-[12px]">
      <Grip vertical />
      <span className="w-[3px]" />
      <Cell><FolderOpen /></Cell>
      <Cell><Folder /></Cell>
      <Cell><Power /></Cell>
      <Cell><Save /></Cell>
      <Sep />
      <Cell><Dots /></Cell>
      <Cell><Cubes /></Cell>
      <Cell><ColorRing /></Cell>
      <Cell><PaintGrid /></Cell>
      <Sep />
      <Cell><Hand /></Cell>
      <Cell><PinAB /></Cell>
      <Cell><Broom /></Cell>
      <Sep />
      <Cell><Question /></Cell>
      <Cell><Info /></Cell>
      <Sep />
      <span className="ml-px mr-[3px] h-full w-px bg-[#b5b5b5]" />
      <Grip vertical />
      <div className="ml-[4px] flex h-[20px] w-[32px] items-center justify-between border border-[#adadad] bg-[#e1e1e1] pl-[3px] pr-[4px] font-['Liberation_Mono',monospace] text-[11px]">
        1
        <svg width="8" height="5" viewBox="0 0 8 5"><path d="M.5 .5 H7.500 L4 4.500 Z" fill="#000" /></svg>
      </div>
    </div>
  );
}

function SideBar() {
  return (
    <div className="flex h-[575px] w-[35px] shrink-0 flex-col items-center border-b border-r border-[#b9b9b9] bg-[#efefef] pt-[4px]">
      <Grip />
      <div className="mt-[4px] flex flex-col">
        {[<Lock />, ...["top", "bottom", "front", "back", "left", "right"].map((f) => <WireCube face={f} />), <SolidCube label="FRONT" />, <SolidCube label="BACK" />, <LilacCube />].map((ic, i) => (
          <span key={i} className="flex h-[30px] items-center justify-center">{ic}</span>
        ))}
      </div>
    </div>
  );
}

function Window() {
  return (
    <div className="flex h-[699px] w-[1075px] shrink-0 flex-col border border-[#5c5c5c] border-t-black bg-[#f0f0f0] text-black">
      <TitleBar />
      <div className="flex h-[23px] items-center gap-[16px] bg-white pl-[8px] text-[12px]">
        {["项目", "工具", "着色", "视图", "配置", "窗口", "关于"].map((m) => <span key={m}>{m}</span>)}
      </div>
      <ToolBar />
      <div className="flex h-[575px] shrink-0">
        <SideBar />
        <div className="flex min-w-0 flex-1 flex-col">
          <div className="flex h-[451px]">
            <div className="flex w-[256px] flex-col pt-[2px]">
              <DockTitle title="资源管理器" className="h-[23px] text-[13px]" />
              <Tree />
            </div>
            <div className="ml-[4px] mr-[4px] w-[592px]">
              <Tabs />
              <Viewport />
            </div>
            <Properties />
          </div>
          <Console />
        </div>
      </div>
      <StatusBar />
    </div>
  );
}

const BACK_LIST = ["试", "字", "试", "文档", "字", "接", "试", "字", "AD", "字", "文件", "文件", "文件", "文件", "字", "文", "件", "试", "AD", "文", "字", "AD", "sc", "字", "字", "字", "字", "字"];

export default function App() {
  return (
    <div className={`flex h-[706px] w-[1089px] flex-col overflow-hidden bg-[#d6d6d6] leading-[16px] ${UI}`}>
      <div className="flex h-[699px] shrink-0">
        <div className="h-full w-[7px] shrink-0 overflow-hidden text-[12px] text-[#aaa]">
          <div className="flex h-[501px] flex-col bg-[#0a0a0a]">
            <span className="mt-[9px]">y</span>
            <span className="-ml-[5px] mt-[48px]">件</span>
            <span className="mt-[16px]">y</span>
          </div>
          <div className="h-[198px] bg-linear-to-r from-[#d8d8d8] to-[#a2a2a2]" />
        </div>
        <Window />
        <div className="flex w-[7px] shrink-0 flex-col overflow-hidden bg-linear-to-r from-[#a8a8a8] to-[#e2e2e2] text-[12px] text-[#555]">
          <div className="flex h-[102px] flex-col pt-[37px]"><span className="-ml-[4px] whitespace-nowrap">el-</span></div>
          {BACK_LIST.map((t, i) => (
            <span key={i} className={`flex h-[21.100px] shrink-0 items-center whitespace-nowrap ${i === 8 ? "bg-[#b5b5b5]" : ""}`}>
              <span className={t.length > 1 ? "-ml-[5px]" : "-ml-[1px]"}>{t}</span>
            </span>
          ))}
        </div>
      </div>
      <div className="flex h-[7px] shrink-0 overflow-hidden bg-linear-to-b from-[#a8a8a8] to-[#dcdcdc] text-[12px] text-[#666]">
        <div className="flex w-[411px] border-r border-[#aaa] pl-[22px]">
          <span className="-mt-[11px] w-[60px] whitespace-nowrap">固定到快</span>
          <span className="-mt-[11px] w-[44px]">复制</span>
          <span className="-mt-[11px] w-[151px]">粘贴</span>
          <span className="-mt-[11px] w-[98px] whitespace-nowrap">移动到 复制到</span>
          <span className="-mt-[11px]">删除</span>
        </div>
        <div className="flex flex-1 text-black">
          <span className="ml-[34px] h-full w-[12px] bg-[#dcc06c]" />
          <span className="-mt-[5px] ml-[7px] w-[201px]">七下</span>
          <span className="mr-[4px] h-full w-[12px] bg-[#f4f4f4]" />
          <span className="-mt-[6px] w-[240px] tracking-[.3px] text-[#333]">libEGL.dll</span>
          <span className="-mt-[6px] w-[120px] whitespace-nowrap tracking-[.2px] text-[#777]">2017-5-26 21:01</span>
          <span className="-mt-[6px] whitespace-nowrap text-[#777]">应用程序</span>
        </div>
      </div>
    </div>
  );
}
